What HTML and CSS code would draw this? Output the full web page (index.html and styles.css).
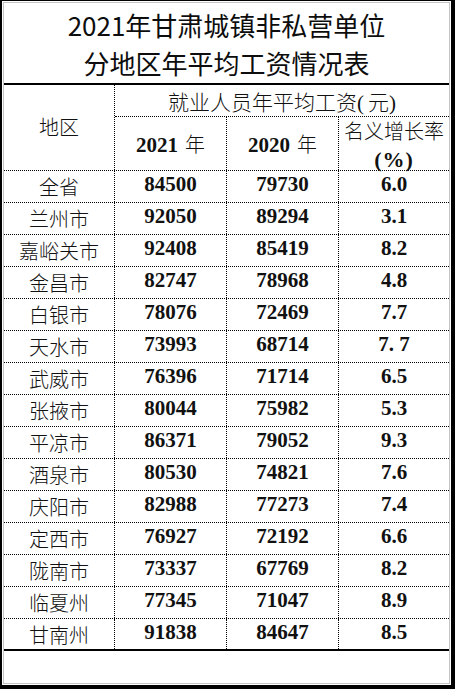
FILE: index.html
```html
<!DOCTYPE html>
<html lang="zh-CN">
<head>
<meta charset="utf-8">
<title>2021年甘肃城镇非私营单位分地区年平均工资情况表</title>
<link rel="stylesheet" href="styles.css">
</head>
<body>
<div class="frame">
  <div class="sheet">
    <div class="title">2021年甘肃城镇非私营单位<br>分地区年平均工资情况表</div>
    <div class="head">
      <div class="h-region">地区</div>
      <div class="h-group"><span>就业人员年平均工资(<span class="yuan">元</span>)</span></div>
      <div class="h-year"><span><b>2021</b> 年</span></div>
      <div class="h-year"><span><b>2020</b> 年</span></div>
      <div class="h-rate"><span class="rate-in">名义增长率<br><b>(%)</b></span></div>
    </div>
    <div class="body">
      <div class="row"><div class="name">全省</div><div class="num">84500</div><div class="num">79730</div><div class="num last">6.0</div></div>
      <div class="row"><div class="name">兰州市</div><div class="num">92050</div><div class="num">89294</div><div class="num last">3.1</div></div>
      <div class="row"><div class="name">嘉峪关市</div><div class="num">92408</div><div class="num">85419</div><div class="num last">8.2</div></div>
      <div class="row"><div class="name">金昌市</div><div class="num">82747</div><div class="num">78968</div><div class="num last">4.8</div></div>
      <div class="row"><div class="name">白银市</div><div class="num">78076</div><div class="num">72469</div><div class="num last">7.7</div></div>
      <div class="row"><div class="name">天水市</div><div class="num">73993</div><div class="num">68714</div><div class="num last">7. 7</div></div>
      <div class="row"><div class="name">武威市</div><div class="num">76396</div><div class="num">71714</div><div class="num last">6.5</div></div>
      <div class="row"><div class="name">张掖市</div><div class="num">80044</div><div class="num">75982</div><div class="num last">5.3</div></div>
      <div class="row"><div class="name">平凉市</div><div class="num">86371</div><div class="num">79052</div><div class="num last">9.3</div></div>
      <div class="row"><div class="name">酒泉市</div><div class="num">80530</div><div class="num">74821</div><div class="num last">7.6</div></div>
      <div class="row"><div class="name">庆阳市</div><div class="num">82988</div><div class="num">77273</div><div class="num last">7.4</div></div>
      <div class="row"><div class="name">定西市</div><div class="num">76927</div><div class="num">72192</div><div class="num last">6.6</div></div>
      <div class="row"><div class="name">陇南市</div><div class="num">73337</div><div class="num">67769</div><div class="num last">8.2</div></div>
      <div class="row"><div class="name">临夏州</div><div class="num">77345</div><div class="num">71047</div><div class="num last">8.9</div></div>
      <div class="row end"><div class="name">甘南州</div><div class="num">91838</div><div class="num">84647</div><div class="num last">8.5</div></div>
    </div>
    <div class="blank"></div>
  </div>
</div>
</body>
</html>
```
FILE: styles.css
```css
html, body {
  margin: 0;
  padding: 0;
  background: #fff;
}

.frame {
  width: 455px;
  height: 689px;
  box-sizing: border-box;
  border-style: solid;
  border-color: #000;
  border-width: 1px 4px 4px 2px;
  padding: 1px;
  background: #fff;
  display: flex;
  flex-direction: column;
}

.sheet {
  flex: 1;
  border: 1px solid #c4c4c4;
  display: flex;
  flex-direction: column;
  color: #111;
  font-family: "Liberation Serif", "Noto Sans CJK SC", serif;
}

.title {
  height: 82px;
  box-sizing: border-box;
  padding-top: 3px;
  border-bottom: 2px solid #000;
  font-family: "Noto Sans CJK SC", sans-serif;
  font-size: 26px;
  line-height: 38px;
  text-align: center;
  color: #0d0d0d;
}

.head {
  display: grid;
  grid-template-columns: 111px 112px 112px 110px;
  grid-template-rows: 32px 53px;
  border-bottom: 1px dotted #000;
}

.head > div {
  box-sizing: border-box;
  display: flex;
  align-items: center;
  justify-content: center;
  text-align: center;
}

.h-region {
  grid-row: 1 / span 2;
  border-right: 1px dotted #000;
  font-size: 20px;
  font-weight: 300;
  padding-bottom: 2px;
}

.h-group {
  grid-column: 2 / span 3;
  border-bottom: 1px dotted #000;
  font-size: 21px;
  font-weight: 300;
}

.yuan {
  margin-left: 4px;
}

.h-year {
  border-right: 1px dotted #000;
  font-size: 20px;
  font-weight: 300;
}

.h-year b {
  font-size: 21px;
  font-weight: 700;
  margin-right: 2px;
}

.h-rate {
  font-size: 20px;
  font-weight: 300;
  line-height: 28px;
  padding-top: 5px;
}

.rate-in {
  display: block;
  white-space: nowrap;
}

.h-rate b {
  font-size: 22px;
  font-weight: 700;
  letter-spacing: 1px;
}

.row {
  display: grid;
  grid-template-columns: 111px 112px 112px 110px;
  height: 32px;
  box-sizing: border-box;
  border-bottom: 1px dotted #000;
}

.row.end {
  border-bottom: 2px solid #000;
}

.row > div {
  box-sizing: border-box;
  display: flex;
  align-items: center;
  justify-content: center;
  border-right: 1px dotted #000;
}

.row > div.last {
  border-right: none;
}

.name {
  font-size: 20px;
  font-weight: 300;
}

.num {
  font-size: 21px;
  font-weight: 700;
  padding-bottom: 4px;
}

.blank {
  flex: 1;
}
```
